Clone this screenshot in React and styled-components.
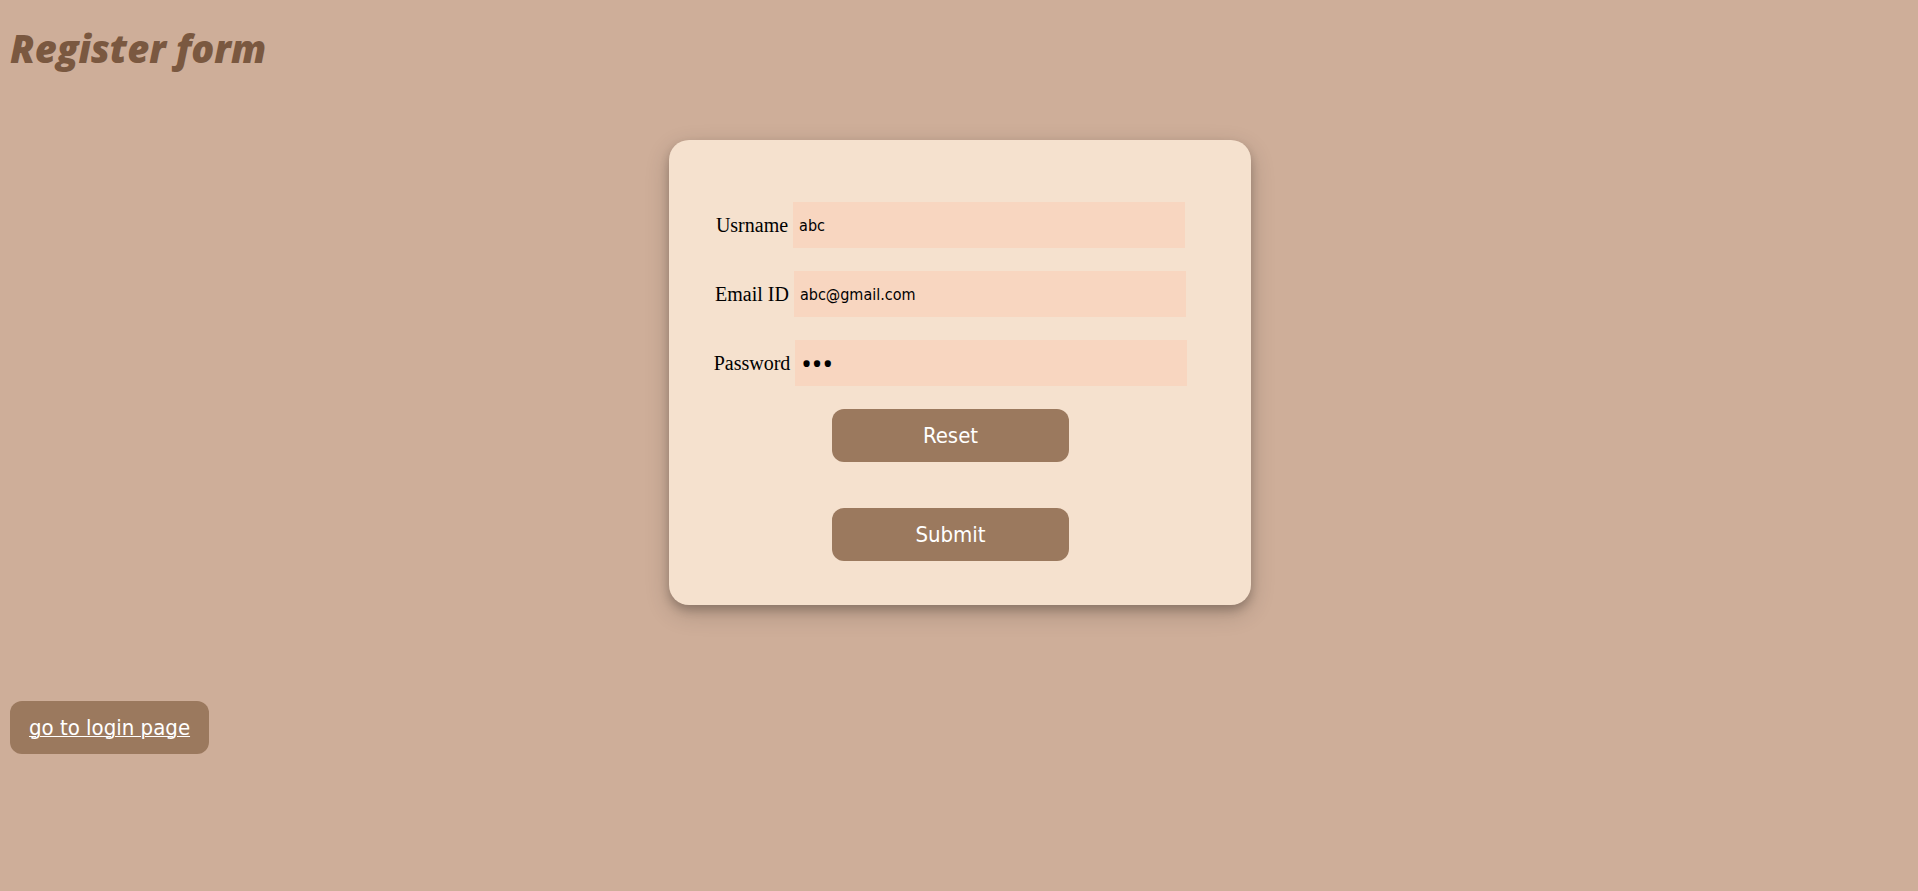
import React from "react";
import styled, { createGlobalStyle } from "styled-components";

const GlobalStyle = createGlobalStyle`
  *, *::before, *::after { box-sizing: border-box; }
  body {
    margin: 0;
    background: #ceae99;
    color: #000;
    font-family: "Liberation Serif", serif;
  }
`;

const Page = styled.main`
  display: flex;
  flex-direction: column;
  align-items: flex-start;
  padding: 24px 8px 24px 10px;
`;

const Title = styled.h1`
  margin: 0 0 68px;
  color: #7a5840;
  font-family: Forte, "Open Sans", sans-serif;
  font-size: 38px;
  font-style: italic;
  font-weight: 800;
  line-height: 48px;
`;

const Card = styled.form`
  display: flex;
  flex-direction: column;
  align-items: center;
  align-self: center;
  width: 100%;
  max-width: 582px;
  margin-bottom: 96px;
  padding: 62px 54px 44px 35px;
  border-radius: 20px;
  background: #f5e1ce;
  box-shadow: 0 5px 10px rgba(0, 0, 0, 0.2), 0 8px 25px rgba(0, 0, 0, 0.19);
`;

const Field = styled.div`
  display: flex;
  align-items: center;
  justify-content: center;
  gap: 5px;
  width: 100%;
  margin-bottom: 23px;
`;

const Label = styled.label`
  flex: none;
  font-size: 20px;
  line-height: 24px;
`;

const TextInput = styled.input`
  width: 392px;
  min-width: 0;
  height: 46px;
  padding: 0 6px;
  border: 0;
  border-radius: 0;
  background: #f8d6c0;
  color: #000;
  font-family: Tahoma, "DejaVu Sans Condensed", sans-serif;
  font-size: 16px;

  &[type="password"] {
    font-family: "Noto Sans", sans-serif;
    font-size: 28px;
  }
`;

const buttonLook = `
  height: 53px;
  border: 0;
  border-radius: 12px;
  background: #9b795e;
  color: #fff;
  font-family: Tahoma, "DejaVu Sans Condensed", sans-serif;
  font-size: 22px;
  line-height: 53px;
  cursor: pointer;
`;

const Actions = styled.div`
  display: flex;
  flex-direction: column;
  gap: 46px;
`;

const Button = styled.button`
  ${buttonLook}
  width: 237px;
  padding: 0;
`;

const LoginLink = styled.a`
  ${buttonLook}
  padding: 0 19px;
  text-decoration: underline;
  text-decoration-thickness: 1px;
`;

const fields = [
  { id: "username", label: "Usrname", type: "text", value: "abc" },
  { id: "email", label: "Email ID", type: "email", value: "abc@gmail.com" },
  { id: "password", label: "Password", type: "password", value: "abc" },
];

export default function App() {
  return (
    <>
      <GlobalStyle />
      <Page>
        <Title>Register form</Title>
        <Card onSubmit={(event) => event.preventDefault()}>
          {fields.map(({ id, label, type, value }) => (
            <Field key={id}>
              <Label htmlFor={id}>{label}</Label>
              <TextInput id={id} name={id} type={type} defaultValue={value} />
            </Field>
          ))}
          <Actions>
            <Button type="reset">Reset</Button>
            <Button type="submit">Submit</Button>
          </Actions>
        </Card>
        <LoginLink href="#login">go to login page</LoginLink>
      </Page>
    </>
  );
}
